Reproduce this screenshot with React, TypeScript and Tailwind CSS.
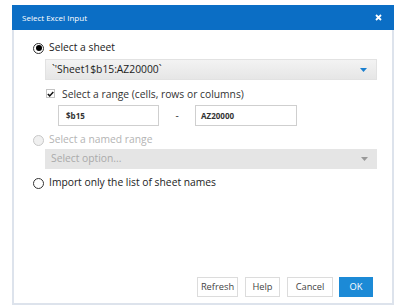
import React from "react";

const font = { fontFamily: '"Open Sans", "Noto Sans", sans-serif' };

function Radio({ checked, disabled }: { checked?: boolean; disabled?: boolean }) {
  return (
    <span
      className={`flex h-[11px] w-[11px] shrink-0 items-center justify-center rounded-full border ${
        disabled ? "border-[#c8c8c8] bg-[#f0f0f0]" : "border-[#333] bg-white"
      }`}
    >
      {checked && <span className="h-[6px] w-[6px] rounded-full bg-black" />}
    </span>
  );
}

function Caret({ color }: { color: string }) {
  return (
    <svg width="7" height="4" viewBox="0 0 7 4">
      <path d="M0 0 H7 L3.5 4 Z" fill={color} />
    </svg>
  );
}

export default function App() {
  return (
    <div className="h-[307px] w-[400px] bg-white" style={font}>
      <div className="ml-[12px] pt-[5px] w-[382px]">
        <div className="flex h-[25px] items-center justify-between bg-[#0b6ec5] pl-[10px] pr-[12px] text-white">
          <span className="text-[8px]">Select Excel Input</span>
          <svg width="7" height="7" viewBox="0 0 7 7">
            <path d="M1 1 L6 6 M6 1 L1 6" stroke="#fff" strokeWidth="1.8" />
          </svg>
        </div>
        <div className="h-[275px] border-x-[2px] border-b-[2px] border-[#dde3ec] bg-white pl-[19px] pr-[15px] pt-[10px]">
          <div className="flex h-[16px] items-center gap-[5px]">
            <Radio checked />
            <span className="text-[10.3px] text-[#222]">Select a sheet</span>
          </div>
          <div className="ml-[12px] mt-[3px] flex h-[21px] items-center justify-between border border-[#e2e2e2] bg-gradient-to-b from-[#f3f3f3] to-[#e6e6e6] pl-[6px] pr-[9px]">
            <span className="text-[10.3px] text-[#222]">`'Sheet1$b15:AZ20000`</span>
            <Caret color="#1a7fcf" />
          </div>
          <div className="ml-[13px] mt-[8px] flex h-[14px] items-center gap-[7px]">
            <span className="-mt-[3px] flex h-[9px] w-[9px] items-center justify-center border border-[#c4c4c4] bg-white">
              <svg width="7" height="6" viewBox="0 0 7 6">
                <path d="M0.8 3 L2.7 4.9 L6.3 1" stroke="#111" strokeWidth="1.5" fill="none" />
              </svg>
            </span>
            <span className="text-[10.3px] text-[#333]">Select a range (cells, rows or columns)</span>
          </div>
          <div className="ml-[25px] mt-[3px] flex items-center">
            <div className="flex h-[21px] w-[101px] items-center border border-[#cfcfcf] pl-[7px] text-[8px] font-bold text-[#333]">
              $b15
            </div>
            <span className="w-[36px] text-center text-[10px] text-[#333]">-</span>
            <div className="flex h-[21px] w-[102px] items-center border border-[#cfcfcf] pl-[5px] text-[8px] font-bold text-[#333]">
              AZ20000
            </div>
          </div>
          <div className="mt-[6px] flex h-[16px] items-center gap-[5px]">
            <Radio disabled />
            <span className="text-[10.3px] text-[#b4b4b4]">Select a named range</span>
          </div>
          <div className="ml-[12px] mt-[1px] flex h-[20px] items-center justify-between bg-[#e5e5e5] pl-[6px] pr-[9px]">
            <span className="text-[10.3px] text-[#aaa]">Select option...</span>
            <Caret color="#999" />
          </div>
          <div className="mt-[6px] flex h-[16px] items-center gap-[5px]">
            <Radio />
            <span className="text-[10.3px] text-[#222]">Import only the list of sheet names</span>
          </div>
          <div className="mt-[86px] flex justify-end gap-[7px] pr-[4px]">
            <button className="h-[20px] w-[41px] border border-[#dcdcdc] text-[9.3px] text-[#444]">Refresh</button>
            <button className="h-[20px] w-[35px] border border-[#dcdcdc] text-[9.3px] text-[#444]">Help</button>
            <button className="h-[20px] w-[46px] border border-[#dcdcdc] text-[9.3px] text-[#444]">Cancel</button>
            <button className="-ml-[1px] h-[20px] w-[34px] bg-[#1c8ad6] text-[9.3px] text-white">OK</button>
          </div>
        </div>
      </div>
    </div>
  );
}
